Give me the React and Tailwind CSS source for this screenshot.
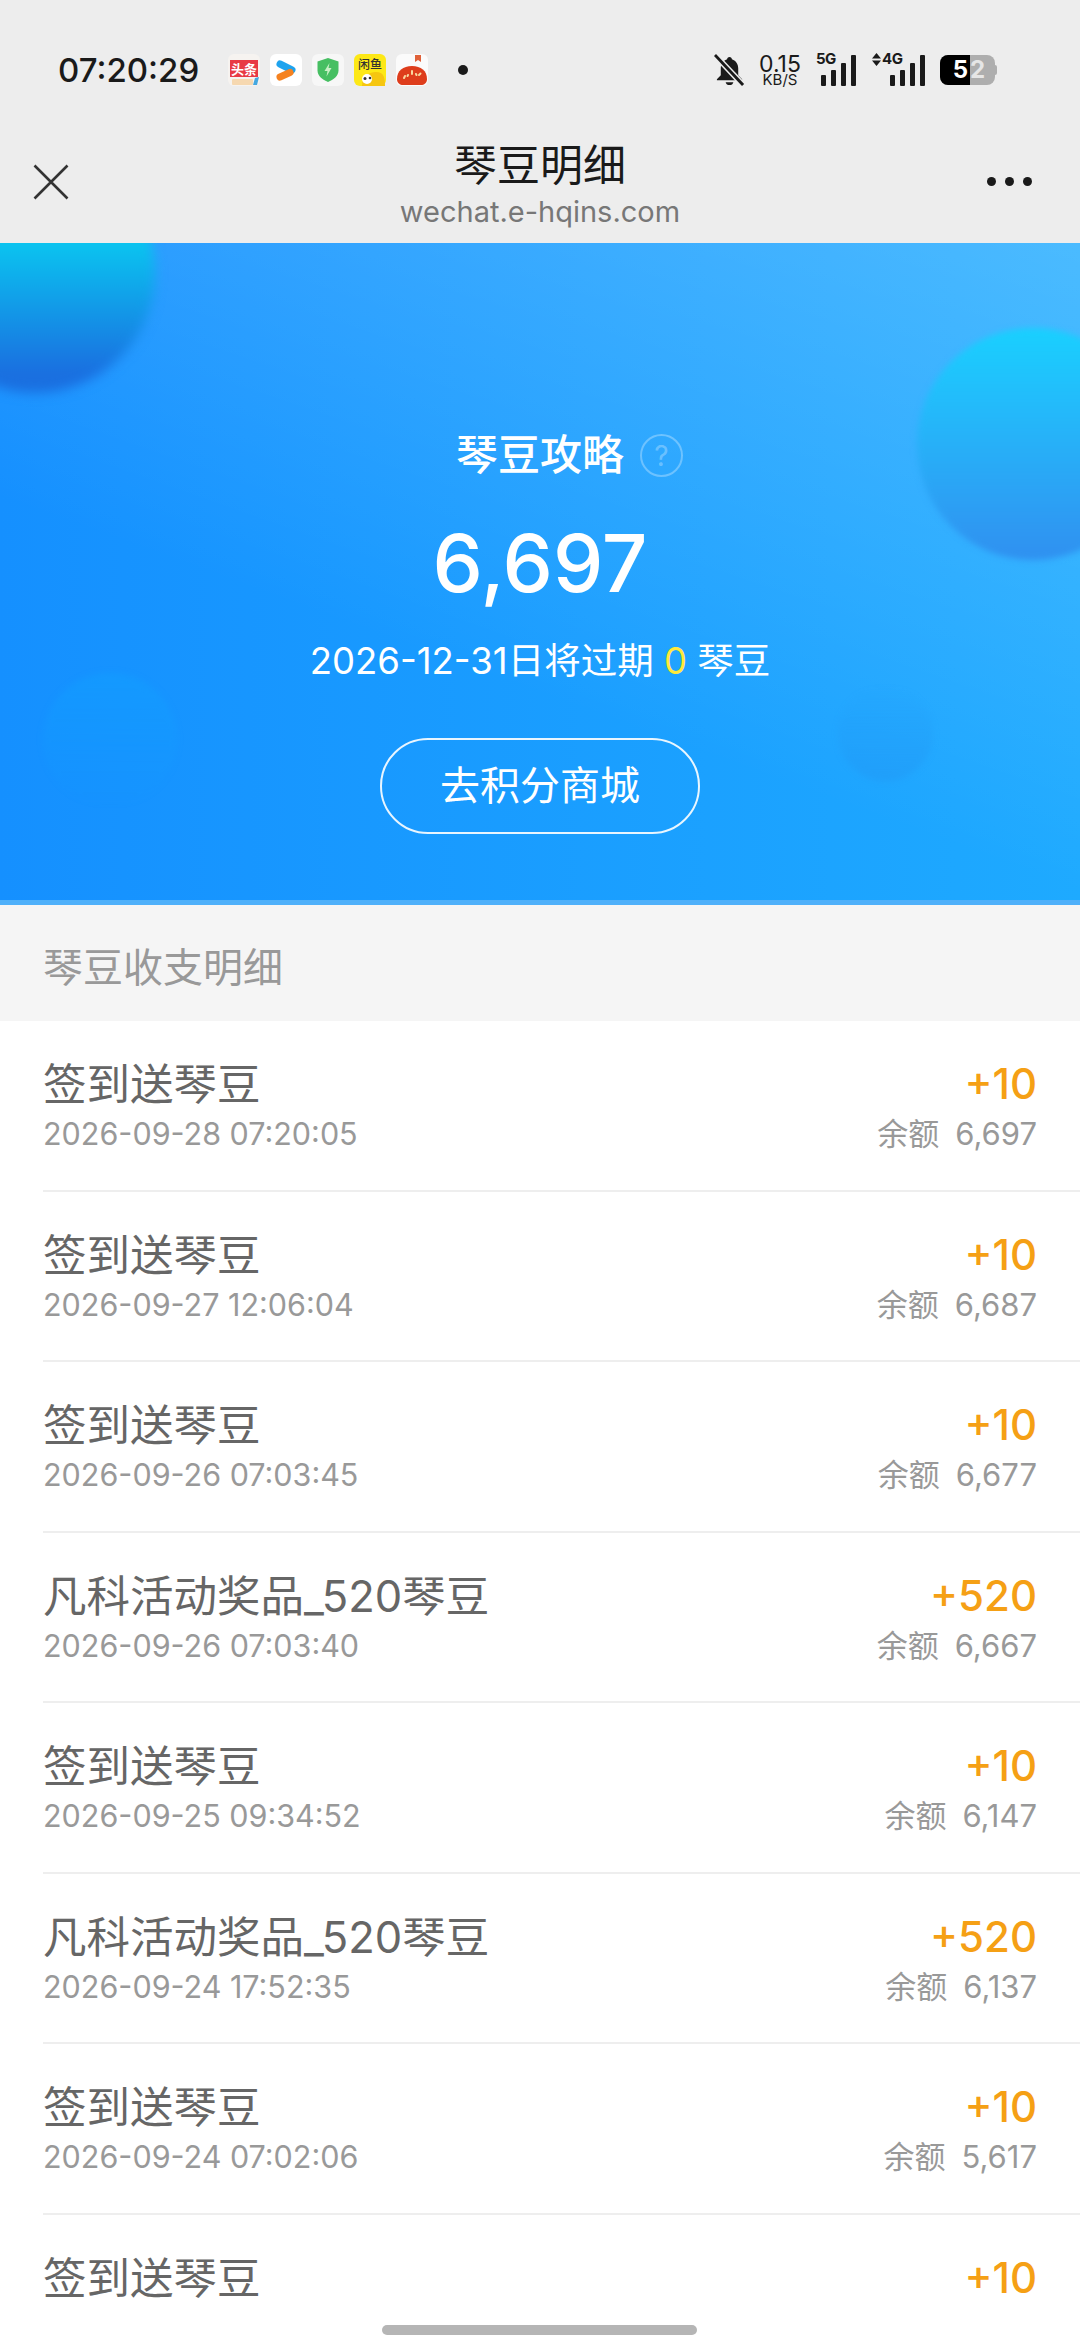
const font = { fontFamily: 'Inter, "Noto Sans CJK SC", sans-serif' };

const rows = [
  ['签到送琴豆', '2026-09-28 07:20:05', '+10', '6,697'],
  ['签到送琴豆', '2026-09-27 12:06:04', '+10', '6,687'],
  ['签到送琴豆', '2026-09-26 07:03:45', '+10', '6,677'],
  ['凡科活动奖品_520琴豆', '2026-09-26 07:03:40', '+520', '6,667'],
  ['签到送琴豆', '2026-09-25 09:34:52', '+10', '6,147'],
  ['凡科活动奖品_520琴豆', '2026-09-24 17:52:35', '+520', '6,137'],
  ['签到送琴豆', '2026-09-24 07:02:06', '+10', '5,617'],
];

function Bars() {
  return (
    <div className="flex items-end gap-[5px]">
      <span className="h-[11px] w-[5px] rounded-[1px] bg-[#1a1a1a]" />
      <span className="h-[16px] w-[5px] rounded-[1px] bg-[#1a1a1a]" />
      <span className="h-[23px] w-[5px] rounded-[1px] bg-[#1a1a1a]" />
      <span className="h-[31px] w-[5px] rounded-[1px] bg-[#1a1a1a]" />
    </div>
  );
}

function AppIcons() {
  return (
    <div className="ml-[29px] flex items-center gap-[10px]">
      <svg width="32" height="32" viewBox="0 0 32 32">
        <rect width="32" height="32" rx="6" fill="#f6f3f0" />
        <rect x="2" y="6" width="28" height="17" fill="#e83a45" />
        <text x="16" y="20" textAnchor="middle" fontSize="13" fontWeight="700" fill="#fff">头条</text>
        <rect x="4" y="25" width="21" height="6" rx="1" fill="#f6d8b0" />
        <path d="M27 24l4-1-2 8-4 0z" fill="#45a8e0" />
      </svg>
      <svg width="32" height="32" viewBox="0 0 32 32">
        <rect width="32" height="32" rx="6" fill="#fff" />
        <path d="M10 10l12 6" stroke="#1fa3ee" strokeWidth="7" strokeLinecap="round" />
        <path d="M10 23l10-4.500" stroke="#f58220" strokeWidth="7" strokeLinecap="round" />
      </svg>
      <svg width="32" height="32" viewBox="0 0 32 32">
        <rect width="32" height="32" rx="6" fill="#f7f7f7" />
        <path d="M16 4l10.500 3.500v9c0 5.500-5 9-10.500 11.500-5.500-2.500-10.500-6-10.500-11.500v-9z" fill="#46bf62" />
        <path d="M17.500 9l-5 8h3l-1 5.500 5-8.500h-3z" fill="#c9f0c6" />
      </svg>
      <svg width="32" height="32" viewBox="0 0 32 32">
        <rect width="32" height="32" rx="6" fill="#fde816" />
        <text x="16" y="15" textAnchor="middle" fontSize="12" fontWeight="500" fill="#333">闲鱼</text>
        <path d="M8 32c0-9 6-14 14-14s9 6 9 14z" fill="#f6c610" />
        <circle cx="13" cy="25" r="5" fill="#fff" />
        <circle cx="11" cy="24.500" r="1.500" fill="#333" />
        <circle cx="16" cy="24" r="1.300" fill="#333" />
      </svg>
      <svg width="32" height="32" viewBox="0 0 32 32">
        <rect width="32" height="32" rx="6" fill="#fbfbfb" />
        <path d="M19 1h6v7l-3-2-3 2z" fill="#e0623a" />
        <path d="M1 25c0-8 6-13 15-13s15 5 15 13c0 4-3 6-6 6H7c-3 0-6-2-6-6z" fill="#de3d1c" />
        <path d="M9 22l-1 2M16 17v3M23 21l1.500-1.500M12 21l-.5 1M20 20l.5 1" stroke="#f9d8a0" strokeWidth="2" strokeLinecap="round" />
      </svg>
      <span className="ml-[20px] h-[10px] w-[10px] rounded-full bg-[#1a1a1a]" />
    </div>
  );
}

function StatusBar() {
  return (
    <div className="flex h-[140px] items-start justify-between pl-[58px] pr-[83px] pt-[50px]">
      <div className="flex h-[40px] items-center">
        <span className="text-[33px] font-medium leading-[40px] text-[#1a1a1a]">07:20:29</span>
        <AppIcons />
      </div>
      <div className="flex h-[40px] items-center">
        <svg width="31" height="33" viewBox="0 0 32 34">
          <path d="M16 3c-1.500 0-2.500 1-2.500 2.500C9 7 7 11 7 15v7l-4 4v1h26v-1l-4-4v-7c0-4-2-8-6.500-9.500C18.500 4 17.500 3 16 3z" fill="#1a1a1a" />
          <path d="M12 29h8c-.5 2-2 3-4 3s-3.500-1-4-3z" fill="#1a1a1a" />
          <path d="M1 1l29 31" stroke="#ededed" strokeWidth="6" />
          <path d="M1 1l29 31" stroke="#1a1a1a" strokeWidth="3" />
        </svg>
        <div className="ml-[13px] flex w-[44px] flex-col items-center text-[#1a1a1a]">
          <span className="text-[23px] leading-[19px]">0.15</span>
          <span className="text-[15px] leading-[12px]">KB/S</span>
        </div>
        <div className="relative ml-[14px] flex h-[32px] w-[40px] justify-end">
          <span className="absolute left-0 top-[-3px] text-[15px] font-bold leading-[16px] tracking-[-0.5px] text-[#1a1a1a]">5G</span>
          <Bars />
        </div>
        <div className="relative ml-[16px] flex h-[32px] w-[53px] justify-end">
          <svg className="absolute left-0 top-[-1px]" width="9" height="13" viewBox="0 0 9 13">
            <path d="M4.500 0L9 5.500H0zM4.500 13L0 7.500h9z" fill="#1a1a1a" />
          </svg>
          <span className="absolute left-[10px] top-[-3px] text-[15px] font-bold leading-[16px] tracking-[-0.5px] text-[#1a1a1a]">4G</span>
          <Bars />
        </div>
        <div className="ml-[15px] flex items-center">
          <div className="flex h-[30px] w-[55px] items-center overflow-hidden rounded-[8px] bg-[#aeaeae]">
            <div className="flex h-full w-[30px] items-center justify-end bg-black pr-[2px]">
              <span className="text-[24px] font-bold leading-none text-white">5</span>
            </div>
            <span className="text-[24px] font-bold leading-none text-[#e6e6e6]">2</span>
          </div>
          <span className="h-[10px] w-[2px] rounded-r-[2px] bg-[#aeaeae]" />
        </div>
      </div>
    </div>
  );
}

function NavBar() {
  return (
    <div className="flex h-[103px] items-start justify-between pl-[33px] pr-[48px]">
      <div className="w-[60px]">
        <svg className="mt-[24px]" width="36" height="36" viewBox="0 0 36 36">
          <path d="M1.500 1.500l33 33M34.500 1.500l-33 33" stroke="#333" strokeWidth="2.600" fill="none" />
        </svg>
      </div>
      <div className="flex flex-col items-center">
        <span className="text-[43px] leading-[50px] text-[#1a1a1a]">琴豆明细</span>
        <span className="mt-[4px] text-[29px] leading-[36px] text-[#777]">wechat.e-hqins.com</span>
      </div>
      <div className="flex w-[45px] justify-between pt-[37px]">
        <span className="h-[9px] w-[9px] rounded-full bg-[#1a1a1a]" />
        <span className="h-[9px] w-[9px] rounded-full bg-[#1a1a1a]" />
        <span className="h-[9px] w-[9px] rounded-full bg-[#1a1a1a]" />
      </div>
    </div>
  );
}

function Hero() {
  return (
    <div className="relative h-[662px] overflow-hidden border-b-[5px] border-[#4fb0fa] bg-[linear-gradient(200deg,rgba(255,255,255,0.2),rgba(255,255,255,0)_62%),linear-gradient(90deg,#1590ff,#1eaaff)] text-white">
      <div className="absolute left-[-85px] top-[-90px] h-[240px] w-[240px] rounded-full bg-[linear-gradient(180deg,#0ac6f0_36%,#1a6fe0_92%)] blur-[6px]" />
      <div className="absolute left-[917px] top-[85px] h-[232px] w-[232px] rounded-full bg-gradient-to-b from-[#19d0ff] to-[#3090f0] blur-[3px]" />
      <div className="absolute left-[43px] top-[430px] h-[134px] w-[134px] rounded-full bg-gradient-to-b from-[#12a0ff] to-transparent opacity-50 blur-[3px]" />
      <div className="absolute left-[838px] top-[443px] h-[95px] w-[95px] rounded-full bg-gradient-to-b from-transparent to-[#2298f5] opacity-50 blur-[3px]" />
      <div className="relative flex flex-col items-center">
        <div className="relative mt-[187px] h-[50px]">
          <span className="text-[42px] font-medium leading-[50px]">琴豆攻略</span>
          <span className="absolute left-[184px] top-[4px] flex h-[43px] w-[43px] items-center justify-center rounded-full border-2 border-white/30 text-[28px] leading-none text-white/30">?</span>
        </div>
        <div className="mt-[38px] text-[80px] font-medium leading-[90px]">6,697</div>
        <div className="mt-[31px] text-[36.500px] leading-[44px]">
          2026-12-31日将过期 <span className="text-[#ffe93b]">0</span> 琴豆
        </div>
        <div className="mt-[55px] flex h-[96px] w-[320px] items-center justify-center rounded-full border-2 border-white/90 text-[40px] leading-none">
          去积分商城
        </div>
      </div>
    </div>
  );
}

function Row({ title, time, amount, balance }) {
  return (
    <div className="h-[170.500px] pl-[43px]">
      <div className="flex h-full items-start justify-between border-b-2 border-[#eeeeee] pr-[43px] pt-[36px]">
        <div>
          <div className="text-[43.500px] leading-[54px] text-[#666]">{title}</div>
          <div className="mt-[3px] text-[30.500px] leading-[40px] text-[#999]">{time}</div>
        </div>
        <div className="flex flex-col items-end">
          <div className="text-[42px] font-medium leading-[54px] text-[#f5a015]">{amount}</div>
          <div className="mt-[3px] text-[31px] leading-[40px] text-[#999]">
            <span className="mr-[16px]">余额</span>
            {balance}
          </div>
        </div>
      </div>
    </div>
  );
}

export default function App() {
  return (
    <div className="relative h-[2352px] w-[1080px] overflow-hidden bg-white" style={font}>
      <div className="bg-[#ededed]">
        <StatusBar />
        <NavBar />
      </div>
      <Hero />
      <div className="flex h-[116px] items-center bg-[#f5f5f5] pl-[43px] pt-[10px] text-[40px] text-[#999]">琴豆收支明细</div>
      {rows.map((r, i) => (
        <Row key={i} title={r[0]} time={r[1]} amount={r[2]} balance={r[3]} />
      ))}
      <div className="flex items-start justify-between px-[43px] pt-[36px]">
        <div className="text-[43.500px] leading-[54px] text-[#666]">签到送琴豆</div>
        <div className="text-[42px] font-medium leading-[54px] text-[#f5a015]">+10</div>
      </div>
      <div className="absolute bottom-[17px] left-[382px] h-[10px] w-[315px] rounded-full bg-[#b5b5b5]" />
    </div>
  );
}
